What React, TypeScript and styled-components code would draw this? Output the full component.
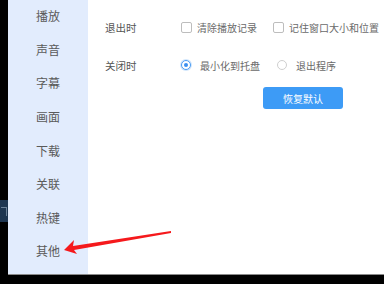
import React from "react";
import styled, { createGlobalStyle } from "styled-components";

const Global = createGlobalStyle`
  html, body { margin: 0; padding: 0; background: #000; }
  body { font-family: "Noto Sans CJK SC", "Noto Sans", sans-serif; }
  #root { width: 384px; height: 284px; overflow: hidden; }
`;

const Page = styled.div`
  position: relative;
  width: 384px;
  height: 284px;
  background: #000;
  display: flex;
  flex-direction: row;
  overflow: hidden;
`;

const Edge = styled.div`
  width: 8px;
  flex: none;
  display: flex;
  flex-direction: column;
  padding-top: 200px;
  box-sizing: border-box;
`;

const EdgeTab = styled.div`
  position: relative;
  height: 22px;
  width: 8px;
  background: #1e3651;
  &::after {
    content: "";
    position: absolute;
    left: 1px;
    top: 7px;
    width: 5px;
    height: 8px;
    border-right: 1px solid #8ea3b8;
    border-top: 1px solid #8ea3b8;
    opacity: 0.7;
  }
`;

const Window = styled.div`
  flex: 1;
  display: flex;
  flex-direction: column;
`;

const Body = styled.div`
  height: 274px;
  display: flex;
  flex-direction: row;
  background: #fff;
`;

const BottomLine = styled.div`
  height: 1px;
  background: #8a8a8a;
`;

const Sidebar = styled.div`
  width: 80px;
  flex: none;
  background: #e2ecfd;
  display: flex;
  flex-direction: column;
`;

const NavItem = styled.div`
  height: 33.57px;
  display: flex;
  align-items: center;
  justify-content: center;
  font-size: 12px;
  color: #5a5a5a;
  &:first-child { margin-top: -1px; }
`;

const Content = styled.div`
  flex: 1;
  padding: 17px 0 0 17px;
  display: flex;
  flex-direction: column;
`;

const Row = styled.div<{ $mt?: number }>`
  display: flex;
  align-items: center;
  height: 20px;
  margin-top: ${(p) => p.$mt ?? 0}px;
  font-size: 10px;
  color: #6a6a6a;
`;

const Label = styled.div`
  width: 76px;
  flex: none;
  color: #555;
  font-size: 10.5px;
`;

const Option = styled.div<{ $gap: number; $width?: number }>`
  display: flex;
  align-items: center;
  gap: ${(p) => p.$gap}px;
  ${(p) => (p.$width ? `width: ${p.$width}px; flex: none;` : "")}
  white-space: nowrap;
`;

const Check = styled.span`
  width: 9px;
  height: 9px;
  border: 1px solid #bdbdbd;
  border-radius: 2px;
  background: #fff;
  flex: none;
`;

const Radio = styled.span<{ $on?: boolean }>`
  width: 8px;
  height: 8px;
  border-radius: 50%;
  border: 1px solid ${(p) => (p.$on ? "#4c9df3" : "#cfcfcf")};
  background: #fff;
  flex: none;
  display: flex;
  align-items: center;
  justify-content: center;
  box-shadow: ${(p) => (p.$on ? "0 0 0 1px rgba(76,157,243,0.25)" : "none")};
  &::after {
    content: "";
    width: 4px;
    height: 4px;
    border-radius: 50%;
    background: ${(p) => (p.$on ? "#3b8ff0" : "transparent")};
  }
`;

const ButtonRow = styled.div`
  display: flex;
  padding-left: 158px;
  margin-top: 12px;
`;

const ResetButton = styled.button`
  width: 80px;
  height: 22px;
  border: none;
  border-radius: 3px;
  background: #3d9bf6;
  color: #fff;
  font-family: "Noto Sans CJK SC", sans-serif;
  font-size: 10px;
  padding: 0;
  display: flex;
  align-items: center;
  justify-content: center;
`;

const ArrowSvg = styled.svg`
  position: absolute;
  left: 0;
  top: 0;
  pointer-events: none;
`;

const navItems = ["播放", "声音", "字幕", "画面", "下载", "关联", "热键", "其他"];

export default function App() {
  return (
    <>
      <Global />
      <Page>
        <Edge>
          <EdgeTab />
        </Edge>
        <Window>
          <Body>
            <Sidebar>
              {navItems.map((n) => (
                <NavItem key={n}>{n}</NavItem>
              ))}
            </Sidebar>
            <Content>
              <Row>
                <Label>退出时</Label>
                <Option $gap={5} $width={92}>
                  <Check />
                  清除播放记录
                </Option>
                <Option $gap={5}>
                  <Check />
                  记住窗口大小和位置
                </Option>
              </Row>
              <Row $mt={18}>
                <Label>关闭时</Label>
                <Option $gap={9} $width={96}>
                  <Radio $on />
                  最小化到托盘
                </Option>
                <Option $gap={9}>
                  <Radio />
                  退出程序
                </Option>
              </Row>
              <ButtonRow>
                <ResetButton>恢复默认</ResetButton>
              </ButtonRow>
            </Content>
          </Body>
          <BottomLine />
        </Window>
        <ArrowSvg width="384" height="284" viewBox="0 0 384 284">
          <polygon
            points="171,231 171,233 74,250 77,254 64,250 74,240 73,246"
            fill="#f5191c"
          />
        </ArrowSvg>
      </Page>
    </>
  );
}
